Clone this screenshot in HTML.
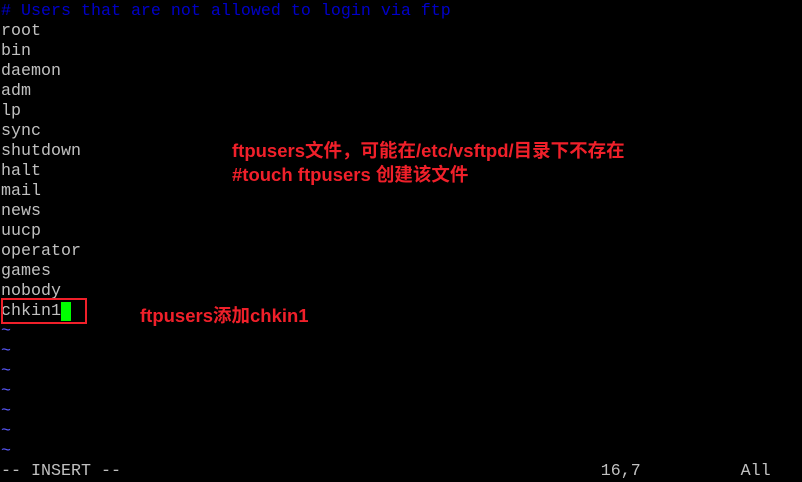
<html><head><style>
body{margin:0;width:802px;height:482px;background:#000;overflow:hidden;position:relative}
.t{position:absolute;left:1px;font-family:"Liberation Mono",monospace;font-size:16.67px;line-height:20px;color:#c0c0c0;white-space:pre}
.r{position:absolute;font-family:"Liberation Sans","Noto Sans CJK SC",sans-serif;font-weight:bold;font-size:18.5px;line-height:22px;color:#f0202a;white-space:pre}
</style></head><body>
<div class="t" style="top:2px"><span style="color:#0000c8"># Users that are not allowed to login via ftp</span>
root
bin
daemon
adm
lp
sync
shutdown
halt
mail
news
uucp
operator
games
nobody
chkin1<span style="background:#00ff00"> </span>
<span style="color:#5a5aff">~
~
~
~
~
~
~</span>
-- INSERT --                                                16,7          All</div>
<div style="position:absolute;left:1px;top:298px;width:82px;height:22px;border:2px solid #f0202a"></div>
<div class="r" style="left:232px;top:140px">ftpusers文件，可能在/etc/vsftpd/目录下不存在</div>
<div class="r" style="left:232px;top:164px">#touch ftpusers 创建该文件</div>
<div class="r" style="left:140px;top:305px">ftpusers添加chkin1</div>
</body></html>
